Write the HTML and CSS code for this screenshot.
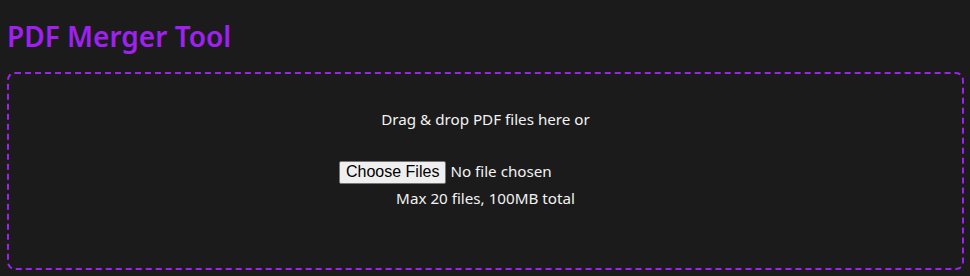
FILE: index.html
```html
<!DOCTYPE html>
<html lang="en">
<head>
    <meta charset="UTF-8">
    <meta name="viewport" content="width=device-width, initial-scale=1.0">
    <title>PDF Merger Tool</title>
    <link rel="stylesheet" href="styles.css">
</head>
<body>

    <h1>PDF Merger Tool</h1>

    <div class="drop-zone" id="dropZone">
        <p class="drop-text">Drag &amp; drop PDF files here or</p>
        <input type="file" id="fileInput" class="file-input" accept="application/pdf" multiple>
        <div class="limits">Max 20 files, 100MB total</div>
    </div>

</body>
</html>
```

FILE: styles.css
```css
body { font-family: "Noto Sans", "Open Sans", sans-serif; background-color: #1b1b1b; color: #f2f2f2; margin: 0; padding: 0 6px 0 7px; }
h1 { color: #a020f0; font-size: 28px; font-weight: 600; margin: 0; padding: 18px 0 18px 0; line-height: 36px; }
.drop-zone { border: 2px dashed #a020f0; border-radius: 8px; padding: 31px 20px 59px; text-align: center; font-size: 15.2px; }
.drop-text { margin: 4px 0 31px; line-height: 21px; }
.file-input { font-family: "Noto Sans", sans-serif; font-size: 15.2px; color: #f2f2f2; width: 293px; }
.file-input::file-selector-button { font-family: "Liberation Sans", Arial, sans-serif; font-size: 16px; background: #efefef; color: #000; border: 1px solid #767676; border-radius: 2px; padding: 1px 6px 2px; margin-right: 4px; }
.limits { margin-top: 4px; line-height: 21px; }
```
